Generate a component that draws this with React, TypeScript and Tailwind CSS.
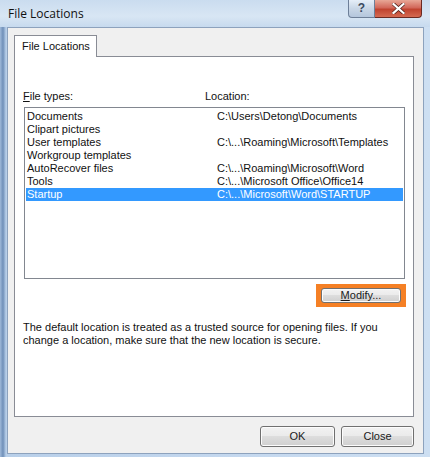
import React from "react"

interface FileRow {
  type: string
  location: string
}

const ROWS: FileRow[] = [
  { type: "Documents", location: "C:\\Users\\Detong\\Documents" },
  { type: "Clipart pictures", location: "" },
  { type: "User templates", location: "C:\\...\\Roaming\\Microsoft\\Templates" },
  { type: "Workgroup templates", location: "" },
  { type: "AutoRecover files", location: "C:\\...\\Roaming\\Microsoft\\Word" },
  { type: "Tools", location: "C:\\...\\Microsoft Office\\Office14" },
  { type: "Startup", location: "C:\\...\\Microsoft\\Word\\STARTUP" },
]

const SELECTED = 6

const btn =
  "flex items-center justify-center rounded-[3px] border border-[#707070] bg-[linear-gradient(#f2f2f2_0%,#ebebeb_45%,#dddddd_50%,#cfcfcf_100%)] text-[#1a1a1a] shadow-[inset_0_0_0_1px_#fcfcfc]"

const App: React.FC = () => {
  return (
    <div
      className="w-[430px] h-[457px] flex flex-col bg-[linear-gradient(90deg,#9fb9d9_0px,#6f8fb8_3px,#b8cfe9_6px,#c3d7ee_50%,#cddff2_100%)] text-[11px] leading-[13px] text-[#111]"
      style={{ fontFamily: '"Liberation Sans", Arial, sans-serif' }}
    >
      {/* title bar */}
      <div className="relative h-[27px] flex items-center pl-[8px] bg-[linear-gradient(180deg,#cadcef,#d8e6f4_60%,#c7daee)]">
        <span
          className="text-[12px] text-[#111]"
          style={{ fontFamily: '"Open Sans", "Noto Sans", sans-serif' }}
        >
          File Locations
        </span>
        <div className="absolute top-0 right-[8px] flex h-[18px]">
          <div className="w-[27px] h-full flex items-center justify-center rounded-bl-[4px] border border-t-0 border-[#6d7f98] bg-[linear-gradient(#e5eef8,#c8d6e6_50%,#b4c6dc)] text-[12px] font-bold text-[#3a4a60]">
            ?
          </div>
          <div className="w-[47px] h-full flex items-center justify-center rounded-br-[4px] border border-t-0 border-l-0 border-[#6b2a22] bg-[linear-gradient(#e8a796,#d2685a_45%,#c0432f_55%,#d56a52)]">
            <svg width="13" height="11" viewBox="0 0 13 11">
              <path
                d="M1.5 1 L11.5 10 M11.5 1 L1.5 10"
                stroke="#4a1a14"
                strokeWidth="3.6"
                strokeLinecap="square"
              />
              <path
                d="M1.5 1 L11.5 10 M11.5 1 L1.5 10"
                stroke="#ffffff"
                strokeWidth="2.2"
                strokeLinecap="square"
              />
            </svg>
          </div>
        </div>
      </div>

      {/* client area */}
      <div className="ml-[7px] mr-[6px] h-[427px] flex flex-col bg-[#f0f0f0] border border-[#8da2bd]">
        <div className="pt-[7px] pl-[6px] flex">
          <div className="w-[83px] h-[22px] -mb-px relative z-10 flex items-center pl-[7px] bg-white border border-b-0 border-[#898c95]">
            File Locations
          </div>
        </div>
        <div className="ml-[6px] mr-[9px] h-[361px] bg-white border border-[#898c95] flex flex-col px-[8px] pt-[33px]">
          <div className="flex">
            <span className="w-[182px]">
              <span className="underline">F</span>ile types:
            </span>
            <span>Location:</span>
          </div>
          <div className="mt-[4px] ml-px h-[172px] border border-[#828790] pt-[2px] px-px">
            {ROWS.map((row, i) => (
              <div
                key={row.type}
                className={
                  i === SELECTED
                    ? "flex h-[13px] bg-[#3399ff] text-white"
                    : "flex h-[13px]"
                }
              >
                <span className="w-[191px] pl-px">{row.type}</span>
                <span>{row.location}</span>
              </div>
            ))}
          </div>
          <div className="flex justify-end mt-[5px] mr-[-1px]">
            <div className="w-[90px] h-[23px] bg-[#f58025] flex items-center justify-center">
              <div className={`${btn} w-[80px] h-[15px]`}>
                <span>
                  <span className="underline">M</span>odify...
                </span>
              </div>
            </div>
          </div>
          <p className="mt-[14px]">
            The default location is treated as a trusted source for opening files. If you
            <br />
            change a location, make sure that the new location is secure.
          </p>
        </div>
        <div className="flex justify-end gap-[6px] mr-[9px] mt-[9px]">
          <div className={`${btn} w-[75px] h-[21px]`}>OK</div>
          <div className={`${btn} w-[73px] h-[21px]`}>Close</div>
        </div>
      </div>
    </div>
  )
}

export default App
